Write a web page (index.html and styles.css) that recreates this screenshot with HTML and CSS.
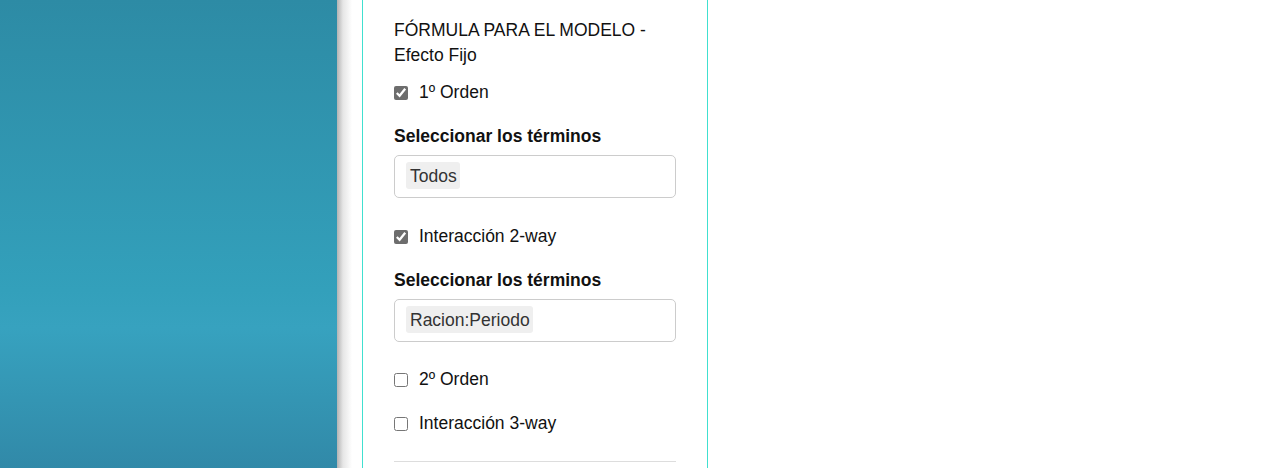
FILE: index.html
```html
<!DOCTYPE html>
<html lang="es">
<head>
<meta charset="utf-8">
<title>Fórmula para el modelo</title>
<link rel="stylesheet" href="styles.css">
</head>
<body>
<div class="layout">
  <aside class="backdrop"></aside>
  <main class="content">
    <section class="panel">
      <h4 class="title">FÓRMULA PARA EL MODELO - Efecto Fijo</h4>

      <label class="check first"><input type="checkbox" checked><span>1º Orden</span></label>
      <div class="field">
        <div class="field-label">Seleccionar los términos</div>
        <div class="select"><span class="chip">Todos</span></div>
      </div>

      <label class="check after-field"><input type="checkbox" checked><span>Interacción 2-way</span></label>
      <div class="field">
        <div class="field-label">Seleccionar los términos</div>
        <div class="select"><span class="chip">Racion:Periodo</span></div>
      </div>

      <label class="check after-field"><input type="checkbox"><span>2º Orden</span></label>
      <label class="check"><input type="checkbox"><span>Interacción 3-way</span></label>

      <hr class="divider">
    </section>
  </main>
</div>
</body>
</html>
```

FILE: styles.css
```css
html, body {
  margin: 0;
  padding: 0;
  height: 100%;
  background: #fff;
  font-family: "Liberation Sans", Arial, sans-serif;
  font-size: 17.5px;
  color: #111;
  overflow: hidden;
}

.layout {
  display: flex;
  height: 468px;
}

.backdrop {
  width: 337px;
  flex: none;
  background: linear-gradient(to bottom, #2d8ba5 0%, #33a0bb 62%, #37a2bf 70%, #3189a8 100%);
}

.content {
  flex: 1;
  display: flex;
  padding-left: 25px;
  background: linear-gradient(to right, #b3b3b3 0px, #e6e6e6 6px, #ffffff 15px);
}

.panel {
  width: 282px;
  padding: 0 31px;
  border-left: 1px solid #40e0d0;
  border-right: 1px solid #40e0d0;
  background: #fff;
}

.title {
  margin: 0;
  padding-top: 18px;
  font-size: 17.5px;
  font-weight: normal;
  line-height: 25px;
  color: #111;
}

.check {
  display: flex;
  align-items: center;
  height: 20px;
  line-height: 20px;
  margin-top: 24px;
  color: #111;
}

.check.first {
  margin-top: 14px;
}

.check.after-field {
  margin-top: 27.5px;
}

.check input {
  width: 14px;
  height: 14px;
  margin: 2px 11px 0 0;
  accent-color: #6d6d6d;
}

.field {
  margin-top: 24px;
}

.field-label {
  font-weight: bold;
  line-height: 20px;
  color: #111;
}

.select {
  margin-top: 9px;
  border: 1px solid #cccccc;
  border-radius: 5px;
  padding: 6px 11px 8px 11px;
  height: 27px;
  display: flex;
  align-items: flex-start;
}

.chip {
  display: inline-block;
  height: 25px;
  line-height: 25px;
  padding: 2px 3px 0 4px;
  background: #efefef;
  border-radius: 3px;
  color: #333;
}

.divider {
  margin: 28px 0 0 0;
  border: 0;
  border-top: 1px solid #dddddd;
  height: 0;
}
```
